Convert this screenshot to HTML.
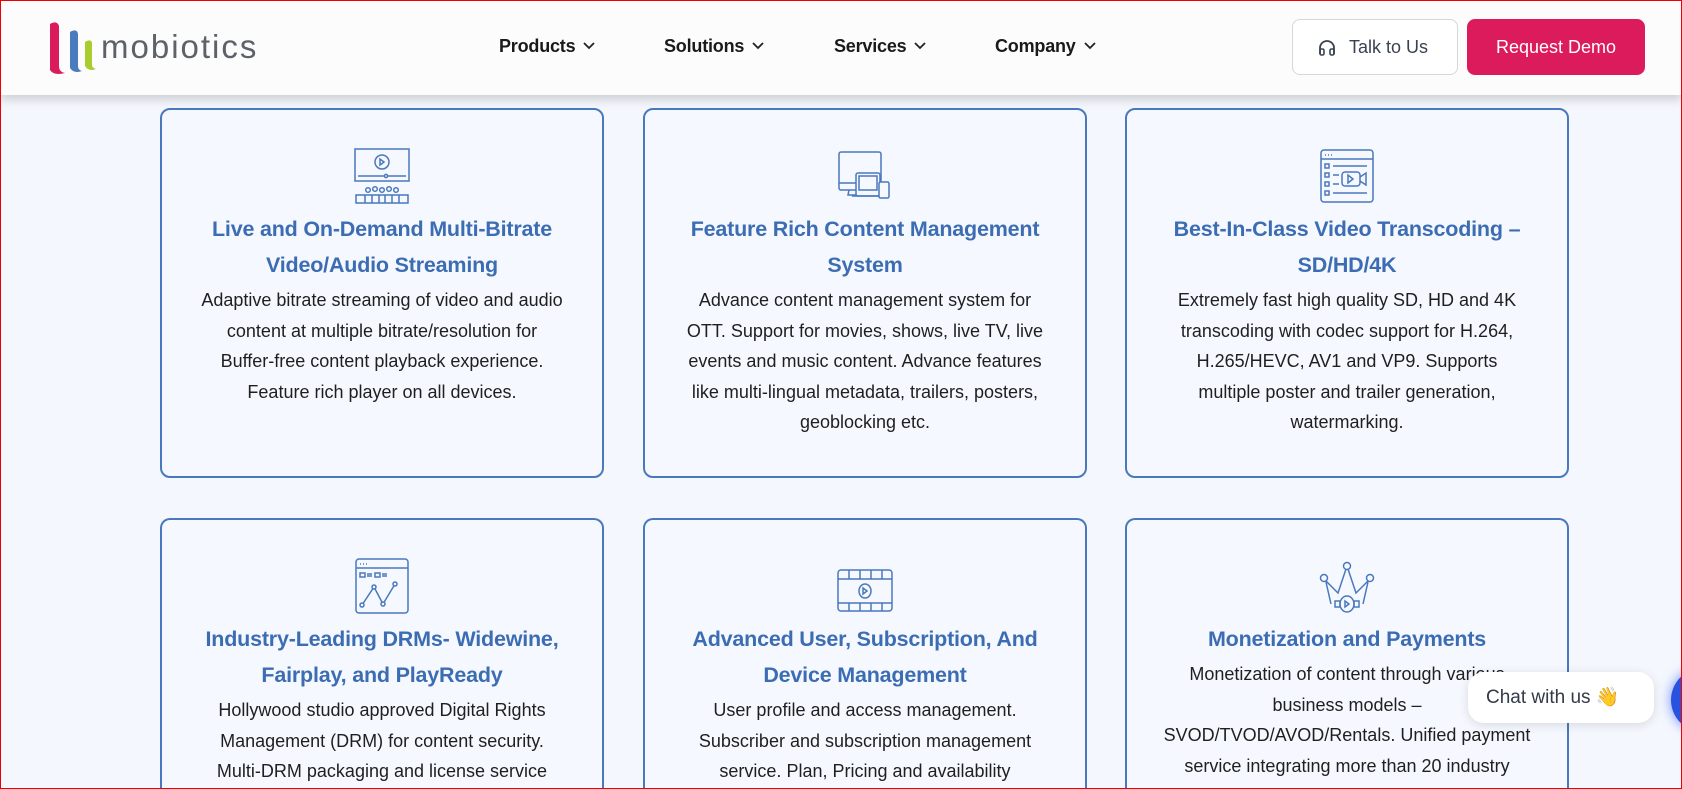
<!DOCTYPE html>
<html style="width:1682px;height:789px;overflow:hidden"><head><meta charset="utf-8"><style>
*{margin:0;padding:0;box-sizing:border-box}
body{width:1682px;height:789px;overflow:hidden;background:#f4f7fd;font-family:"Liberation Sans",sans-serif;position:relative}
.frame{position:absolute;left:0;top:0;width:1682px;height:789px;border:1px solid #e00;z-index:20;pointer-events:none}
.hdr{position:absolute;left:0;top:0;width:1682px;height:95px;background:#fcfcfd;box-shadow:0 4px 10px rgba(0,0,0,.18);z-index:5}
.nav{position:absolute;top:36px;font-size:18px;font-weight:bold;color:#1a1a1a;letter-spacing:-.2px}
.nav svg{margin-left:8px;vertical-align:2px}
.card{position:absolute;width:444px;height:370px;border:2px solid #4a78bd;border-radius:10px;background:#f5f8ff;text-align:center;overflow:hidden}
.card.r2{height:271px;border-bottom:none;border-radius:10px 10px 0 0}
.card svg.ic{display:block;margin:38px auto 0;}
.t{color:#3c6db3;font-size:21.5px;line-height:36px;font-weight:bold;margin-top:7px;letter-spacing:-.2px;white-space:nowrap}
.b{color:#1f1f1f;font-size:18px;line-height:30.5px;margin-top:2px;white-space:nowrap}
</style></head><body>
<div class="frame"></div>
<div class="hdr">
<svg style="position:absolute;left:46px;top:20px" width="56" height="56" viewBox="0 0 56 56">
<path d="M4 4 Q11 0 13 6 L13 46 Q13 52 19 53 Q8 56 4 50 Z" fill="#dc1b5c"/>
<path d="M24 12 Q31 8 32 14 L32 46 Q32 50 36 51 Q28 54 24 48 Z" fill="#4a7bbf"/>
<path d="M39 22 Q46 18 46 24 L46 45 Q46 48 50 49 Q43 52 39 46 Z" fill="#a9cc2f"/>
</svg>
<div style="position:absolute;left:101px;top:28px;font-size:33px;color:#5d6168;letter-spacing:2px">mobiotics</div>
<div class="nav" style="left:499px">Products<svg width="12" height="8"><path d="M1 1l5 5 5-5" stroke="#222" stroke-width="1.8" fill="none"/></svg></div>
<div class="nav" style="left:664px">Solutions<svg width="12" height="8"><path d="M1 1l5 5 5-5" stroke="#222" stroke-width="1.8" fill="none"/></svg></div>
<div class="nav" style="left:834px">Services<svg width="12" height="8"><path d="M1 1l5 5 5-5" stroke="#222" stroke-width="1.8" fill="none"/></svg></div>
<div class="nav" style="left:995px">Company<svg width="12" height="8"><path d="M1 1l5 5 5-5" stroke="#222" stroke-width="1.8" fill="none"/></svg></div>
<div style="position:absolute;left:1292px;top:19px;width:166px;height:56px;border:1px solid #d4d6e0;border-radius:8px;background:#fff;color:#3a4252;font-size:18px;line-height:54px;padding-left:56px">Talk to Us
<svg style="position:absolute;left:25px;top:19px" width="18" height="18" viewBox="0 0 18 18"><path d="M2 15V9a7 7 0 0 1 14 0v6" stroke="#3a4252" stroke-width="1.8" fill="none"/><rect x="2" y="10" width="4" height="6" rx="1.5" stroke="#3a4252" stroke-width="1.6" fill="none"/><rect x="12" y="10" width="4" height="6" rx="1.5" stroke="#3a4252" stroke-width="1.6" fill="none"/></svg></div>
<div style="position:absolute;left:1467px;top:19px;width:178px;height:56px;border-radius:8px;background:#dc1b5c;color:#fff;font-size:18px;line-height:56px;text-align:center">Request Demo</div>
</div>

<div class="card" style="left:160px;top:108px">
<svg class="ic" width="56" height="56" viewBox="0 0 56 56" fill="none" stroke="#4a78bd" stroke-width="1.5"><rect x="1" y="1" width="54" height="32"/><circle cx="28" cy="14" r="7"/><path d="M26 11v6l4-3z"/><path d="M4 28h48"/><circle cx="32" cy="28" r="1.6" fill="#f5f8ff"/><g><circle cx="14" cy="42" r="2.3"/><circle cx="21" cy="41" r="2.3"/><circle cx="28" cy="42" r="2.3"/><circle cx="35" cy="41" r="2.3"/><circle cx="42" cy="42" r="2.3"/><path d="M2 55v-8h52v8zM11 47v8M18 47v8M25 47v8M31 47v8M38 47v8M45 47v8"/></g></svg>
<div class="t">Live and On-Demand Multi-Bitrate<br>Video/Audio Streaming</div>
<div class="b">Adaptive bitrate streaming of video and audio<br>content at multiple bitrate/resolution for<br>Buffer-free content playback experience.<br>Feature rich player on all devices.</div></div>

<div class="card" style="left:643px;top:108px">
<svg class="ic" width="56" height="56" viewBox="0 0 56 56" fill="none" stroke="#4a78bd" stroke-width="1.5"><rect x="2" y="4" width="42" height="38" rx="2"/><path d="M2 35h17M12 42l-1 5h8"/><rect x="19" y="25" width="24" height="23" rx="2" fill="#f5f8ff"/><rect x="22" y="28" width="18" height="14"/><path d="M15 48h28"/><rect x="42" y="34" width="10" height="16" rx="1.5" fill="#f5f8ff"/></svg>
<div class="t">Feature Rich Content Management<br>System</div>
<div class="b">Advance content management system for<br>OTT. Support for movies, shows, live TV, live<br>events and music content. Advance features<br>like multi-lingual metadata, trailers, posters,<br>geoblocking etc.</div></div>

<div class="card" style="left:1125px;top:108px">
<svg class="ic" width="56" height="56" viewBox="0 0 56 56" fill="none" stroke="#4a78bd" stroke-width="1.5"><rect x="2" y="2" width="52" height="52" rx="3"/><path d="M2 11h52M6 7h1M9 7h1M12 7h1"/><rect x="6" y="16" width="4" height="4"/><rect x="6" y="25" width="4" height="4"/><rect x="6" y="34" width="4" height="4"/><rect x="6" y="43" width="4" height="4"/><path d="M14 18h34M14 27h6M14 36h6M14 45h34"/><rect x="23" y="24" width="18" height="14" rx="3"/><path d="M41 29l6-4v12l-6-4M29 27v8l5-4z"/></svg>
<div class="t">Best-In-Class Video Transcoding –<br>SD/HD/4K</div>
<div class="b">Extremely fast high quality SD, HD and 4K<br>transcoding with codec support for H.264,<br>H.265/HEVC, AV1 and VP9. Supports<br>multiple poster and trailer generation,<br>watermarking.</div></div>

<div class="card r2" style="left:160px;top:518px">
<svg class="ic" width="56" height="56" viewBox="0 0 56 56" fill="none" stroke="#4a78bd" stroke-width="1.5"><rect x="2" y="1" width="52" height="54" rx="3"/><path d="M2 10h52M6 6h1M9 6h1M12 6h1"/><rect x="6" y="15" width="5" height="4"/><path d="M13 16h5M13 18h5"/><rect x="21" y="15" width="5" height="4"/><path d="M28 16h5M28 18h5"/><path d="M8 47l12-18 9 17 12-20"/><circle cx="8" cy="47" r="2" fill="#f5f8ff"/><circle cx="20" cy="29" r="2" fill="#f5f8ff"/><circle cx="29" cy="46" r="2" fill="#f5f8ff"/><circle cx="41" cy="26" r="2" fill="#f5f8ff"/></svg>
<div class="t">Industry-Leading DRMs- Widewine,<br>Fairplay, and PlayReady</div>
<div class="b">Hollywood studio approved Digital Rights<br>Management (DRM) for content security.<br>Multi-DRM packaging and license service</div></div>

<div class="card r2" style="left:643px;top:518px">
<svg class="ic" width="56" height="56" viewBox="0 0 56 56" fill="none" stroke="#4a78bd" stroke-width="1.5"><rect x="1" y="12" width="54" height="41" rx="3"/><path d="M1 21h54M1 45h54M12 12v9M23 12v9M34 12v9M45 12v9M12 45v8M23 45v8M34 45v8M45 45v8"/><ellipse cx="28" cy="33" rx="6" ry="7"/><path d="M26 30v6l4-3z"/></svg>
<div class="t">Advanced User, Subscription, And<br>Device Management</div>
<div class="b">User profile and access management.<br>Subscriber and subscription management<br>service. Plan, Pricing and availability</div></div>

<div class="card r2" style="left:1125px;top:518px">
<svg class="ic" width="60" height="56" viewBox="0 0 60 56" fill="none" stroke="#4a78bd" stroke-width="1.5"><circle cx="30" cy="8" r="3.5"/><circle cx="7" cy="20" r="3.5"/><circle cx="53" cy="20" r="3.5"/><path d="M9 23l12 12 8-24M51 23l-12 12-8-24M9 24l5 22M51 24l-5 22"/><ellipse cx="30" cy="46" rx="7" ry="8"/><path d="M28 43v6l4-3z"/><rect x="18" y="43" width="5" height="6"/><rect x="37" y="43" width="5" height="6"/></svg>
<div class="t">Monetization and Payments</div>
<div class="b">Monetization of content through various<br>business models –<br>SVOD/TVOD/AVOD/Rentals. Unified payment<br>service integrating more than 20 industry</div></div>

<div style="position:absolute;left:1468px;top:672px;width:186px;height:51px;border-radius:16px;background:#fff;box-shadow:0 2px 10px rgba(0,0,0,.12);font-size:19px;color:#333a48;line-height:51px;padding-left:18px;z-index:6">Chat with us <span style="font-size:19px">👋</span></div>
<div style="position:absolute;left:1671px;top:668px;width:64px;height:64px;border-radius:50%;background:#2a52e0;box-shadow:0 0 12px #6f8cff;z-index:6"></div>
</body></html>
